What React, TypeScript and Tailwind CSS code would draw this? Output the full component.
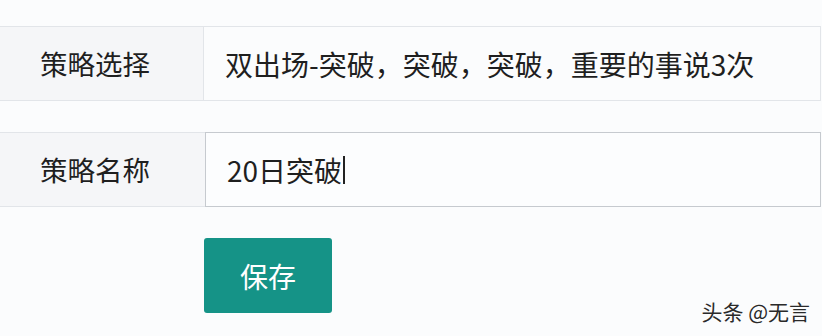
export default function App() {
  return (
    <div
      className="relative w-[822px] h-[336px] overflow-hidden bg-[#fbfcfd] pt-[26px] text-[#1f1f1f]"
      style={{ fontFamily: '"Noto Sans CJK SC", "Noto Sans", sans-serif' }}
    >
      {/* strategy select row */}
      <div className="flex h-[75px] w-[821px] border-y border-r border-[#e2e5e9]">
        <div className="flex w-[204px] items-center border-r border-[#e2e5e9] bg-[#f5f6f8] pl-[40px] text-[27.5px]">
          策略选择
        </div>
        <div className="flex flex-1 items-center pl-[21px] text-[28px]">
          双出场-突破，突破，突破，重要的事说3次
        </div>
      </div>

      {/* strategy name row */}
      <div className="mt-[31px] flex h-[75px] w-[821px]">
        <div className="flex w-[205px] items-center border-y border-[#e2e5e9] bg-[#f5f6f8] pl-[40px] text-[27.5px]">
          策略名称
        </div>
        <div className="flex flex-1 items-center border border-[#c6cacf] bg-[#fcfdfe] pl-[21px] text-[28px]">
          20日突破
          <span className="ml-[1px] inline-block h-[28px] w-[2px] bg-[#222]" />
        </div>
      </div>

      <div className="mt-[31px] pl-[204px]">
        <button className="flex h-[75px] w-[128px] items-center justify-center rounded-[3px] bg-[#159387] text-[28px] text-white">
          保存
        </button>
      </div>

      <div className="absolute right-[12px] bottom-[9px] text-[21px] text-[#2a2a2a] [text-shadow:0_0_2px_#fff]">
        头条 @无言
      </div>
    </div>
  );
}
